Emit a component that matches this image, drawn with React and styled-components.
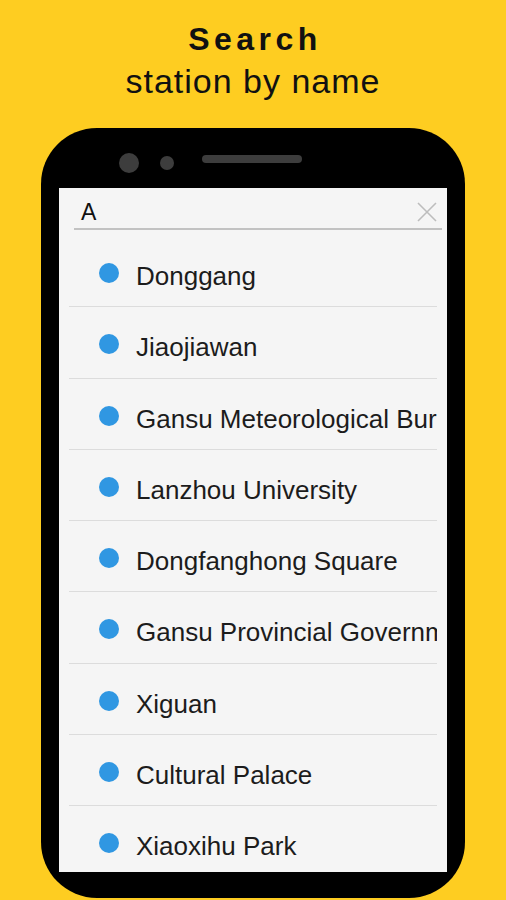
import React from 'react'
import styled, { createGlobalStyle } from 'styled-components'

const GlobalStyle = createGlobalStyle`
  html, body {
    margin: 0;
    padding: 0;
    background: #fecd21;
  }
  * {
    box-sizing: border-box;
  }
`

const Page = styled.div`
  display: flex;
  flex-direction: column;
  align-items: center;
  width: 506px;
  height: 900px;
  overflow: hidden;
  background: #fecd21;
  font-family: "Liberation Sans", Arial, sans-serif;
  color: #111;
`
const Title = styled.div`
  margin-top: 21px;
  font-size: 32px;
  line-height: 36px;
  font-weight: 700;
  letter-spacing: 4.5px;
  padding-left: 4px;
`
const Subtitle = styled.div`
  margin-top: 4px;
  font-size: 34px;
  line-height: 40px;
  letter-spacing: 1px;
`
const Phone = styled.div`
  display: flex;
  flex-direction: column;
  margin-top: 27px;
  width: 424px;
  height: 770px;
  background: #000;
  border-radius: 56px;
  padding: 0 18px 26px;
`
const TopBar = styled.div`
  display: flex;
  align-items: center;
  height: 60px;
  padding: 25px 0 15px 60px;
`
const Lens = styled.span`
  width: ${p => p.size}px;
  height: ${p => p.size}px;
  margin-right: ${p => p.gap}px;
  border-radius: 50%;
  background: #3d3d3d;
`
const Speaker = styled.span`
  width: 100px;
  height: 8px;
  margin-bottom: 8px;
  border-radius: 4px;
  background: #3d3d3d;
`
const Screen = styled.div`
  flex: 1;
  overflow: hidden;
  background: #f5f5f5;
`
const SearchRow = styled.div`
  display: flex;
  align-items: center;
  height: 42px;
  margin: 0 5px 0 15px;
  padding: 10px 5px 2px 7px;
  border-bottom: 2px solid #c2c2c2;
`
const Query = styled.span`
  flex: 1;
  font-size: 23px;
  line-height: 28px;
  color: #111;
`
const List = styled.div`
  margin-top: 6px;
  padding: 0 10px;
`
const Row = styled.div`
  display: flex;
  align-items: flex-start;
  height: 71.3px;
  padding: 23px 0 0 30px;
  border-bottom: 1px solid #dcdcdc;
  overflow: hidden;
`
const Dot = styled.span`
  flex: none;
  width: 20px;
  height: 20px;
  margin-top: 4px;
  border-radius: 50%;
  background: #3097e2;
`
const Name = styled.span`
  margin-left: 17px;
  font-size: 26px;
  line-height: 34px;
  white-space: nowrap;
  color: #1c1c1c;
`

const stations = [
  'Donggang',
  'Jiaojiawan',
  'Gansu Meteorological Bureau',
  'Lanzhou University',
  'Dongfanghong Square',
  'Gansu Provincial Government',
  'Xiguan',
  'Cultural Palace',
  'Xiaoxihu Park'
]

const CloseIcon = () => (
  <svg width="20" height="20" viewBox="0 0 20 20">
    <path d="M1 1 L19 19 M19 1 L1 19" stroke="#bdbdbd" strokeWidth="1.6" fill="none" />
  </svg>
)

const App = () => (
  <Page>
    <GlobalStyle />
    <Title>Search</Title>
    <Subtitle>station by name</Subtitle>
    <Phone>
      <TopBar>
        <Lens size={20} gap={21} />
        <Lens size={14} gap={28} />
        <Speaker />
      </TopBar>
      <Screen>
        <SearchRow>
          <Query>A</Query>
          <CloseIcon />
        </SearchRow>
        <List>
          {stations.map(name => (
            <Row key={name}>
              <Dot />
              <Name>{name}</Name>
            </Row>
          ))}
        </List>
      </Screen>
    </Phone>
  </Page>
)

export default App
